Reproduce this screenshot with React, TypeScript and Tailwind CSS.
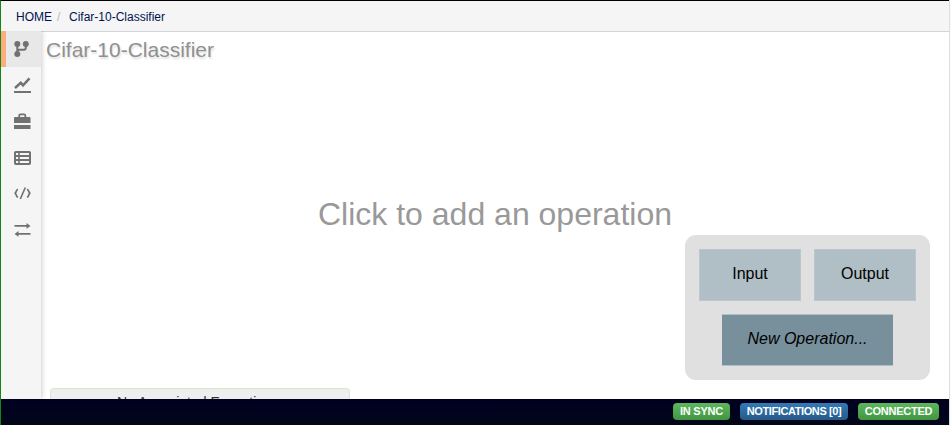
import type { ReactNode } from "react";

function Icon({ children }: { children: ReactNode }) {
  return (
    <svg width="19" height="18" viewBox="0 0 19 18" fill="none" stroke="#717171" strokeWidth="2">
      {children}
    </svg>
  );
}

const tools: { name: string; icon: ReactNode }[] = [
  {
    name: "Editor",
    icon: (
      <Icon>
        <g fill="#717171" stroke="none">
          <circle cx="4.3" cy="4" r="3" />
          <circle cx="12.8" cy="4" r="3" />
          <circle cx="4.3" cy="14" r="3" />
        </g>
        <path d="M4.300 4v10M12.800 4v3.700q0 2-2 2H6.300q-2 0-2 2" />
      </Icon>
    ),
  },
  {
    name: "Results",
    icon: (
      <Icon>
        <path d="M2 12l5.800-5.200 2.200 2.600 6.500-7" strokeWidth="2.500" />
        <path d="M1 16h17" />
      </Icon>
    ),
  },
  {
    name: "Library",
    icon: (
      <Icon>
        <path d="M6.200 5V3.500q0-1.200 1.200-1.200h3.700q1.200 0 1.200 1.200V5" strokeWidth="1.800" />
        <path
          d="M2 5h14.500q1 0 1 1v5H1V6q0-1 1-1zM1 13h16.500v4H1z"
          fill="#717171"
          stroke="none"
        />
      </Icon>
    ),
  },
  {
    name: "Table",
    icon: (
      <Icon>
        <rect x="2" y="4" width="15" height="12" rx=".8" />
        <path d="M2 8h15M2 12h15" strokeWidth="1.800" />
        <path d="M6 4v12" strokeWidth="1.600" />
      </Icon>
    ),
  },
  {
    name: "Code",
    icon: (
      <Icon>
        <path d="M5 5.200Q3.300 5.800 3.300 7.500L2.200 9.300l1.100 1.700q0 1.700 1.700 2.200M14 5.200q1.700.6 1.700 2.300l1.100 1.800-1.100 1.700q0 1.700-1.700 2.200" strokeWidth="1.700" />
        <path d="M12.300 3.500L7.300 15" strokeWidth="1.600" />
      </Icon>
    ),
  },
  {
    name: "Exchange",
    icon: (
      <Icon>
        <path d="M1.500 5.900H15M4 13.900h13.500" strokeWidth="1.900" />
        <path d="M13.500 3l4 2.900-4 2.900zM5.500 11l-4 2.900 4 2.900z" fill="#717171" stroke="none" />
      </Icon>
    ),
  },
];

export default function App() {
  return (
    <div className="flex h-[425px] w-[951px] bg-[#fafafa] font-['Liberation_Sans',Arial,sans-serif]">
      <div className="flex w-[949px] shrink-0 flex-col border-l border-t border-l-[#118811] border-t-black bg-white">
        <header className="flex h-[31px] shrink-0 items-center border-b border-[#d3d3dc] bg-[#f5f5f5] pl-[15px] pt-px text-[12px] text-[#001450]">
          <span>HOME</span>
          <span className="w-[17px] pl-[5px] text-[#bbb]">/</span>
          <span>Cifar-10-Classifier</span>
        </header>
        <div className="flex h-[367px] shrink-0">
          <nav className="z-10 -mt-px flex h-[368px] w-10 shrink-0 flex-col bg-[#f5f5f5] shadow-[1px_0_5px_rgba(0,0,0,0.2)] [clip-path:inset(0_-8px_0_0)]">
            {tools.map((tool, i) => (
              <div
                key={tool.name}
                title={tool.name}
                className={
                  i === 0
                    ? "flex h-9 items-center border-l-[5px] border-[#ffab80] bg-[#e8e8e8] pl-[7px]"
                    : "flex h-9 items-center pl-3"
                }
              >
                {tool.icon}
              </div>
            ))}
          </nav>
          <main className="flex min-w-0 grow flex-col overflow-hidden">
            <h1 className="h-[36px] pl-[5px] pt-[6px] text-[21px] leading-6 text-[#909090] [text-shadow:1px_2px_2px_#ddd]">
              Cifar-10-Classifier
            </h1>
            <div className="flex h-[167px] items-end justify-center">
              <p className="h-[39px] whitespace-nowrap text-[32px] leading-9 text-[#999]">
                Click to add an operation
              </p>
            </div>
            <div className="flex items-end justify-between pl-[9px] pr-[19px]">
              <div className="h-[11px] w-[300px] overflow-hidden rounded-t-[4px] border border-b-0 border-[#d6e9c6] bg-[#eee] pr-[4px] text-center text-[14px] text-[#333]">
                <div className="mt-[3px] leading-5">No Associated Executions</div>
              </div>
              <div className="mb-[19px] flex h-[145px] w-[245px] flex-col items-center rounded-[11px] bg-[#e0e0e0] pt-[14px] text-[16px] text-black">
                <div className="flex gap-[13px]">
                  <div className="flex h-[52px] w-[102px] items-center justify-center border border-[#bbc7cc] bg-[#b0bec5] pb-[3px]">
                    Input
                  </div>
                  <div className="flex h-[52px] w-[102px] items-center justify-center border border-[#bbc7cc] bg-[#b0bec5] pb-[3px]">
                    Output
                  </div>
                </div>
                <div className="mt-[13px] flex h-[52px] w-[171px] items-center justify-center border-y border-[#b0bec5] bg-[#78909c] pb-[3px] italic">
                  New Operation...
                </div>
              </div>
            </div>
          </main>
        </div>
        <footer className="flex h-[26px] shrink-0 items-start justify-end gap-[10px] bg-gradient-to-b from-[#000022] to-[#020617] pr-[10px] pt-1 text-[11px] font-bold leading-[17px] text-white">
          <span className="w-[57px] whitespace-nowrap rounded-[4px] bg-gradient-to-b from-[#5cb85c] to-[#419641] text-center tracking-[-0.25px]">
            IN SYNC
          </span>
          <span className="w-[108px] whitespace-nowrap rounded-[4px] bg-gradient-to-b from-[#337ab7] to-[#265a88] text-center tracking-[-0.4px]">
            NOTIFICATIONS [0]
          </span>
          <span className="w-[81px] whitespace-nowrap rounded-[4px] bg-gradient-to-b from-[#5cb85c] to-[#419641] text-center tracking-[-0.25px]">
            CONNECTED
          </span>
        </footer>
      </div>
      <div className="w-px bg-[#dedede]" />
    </div>
  );
}
